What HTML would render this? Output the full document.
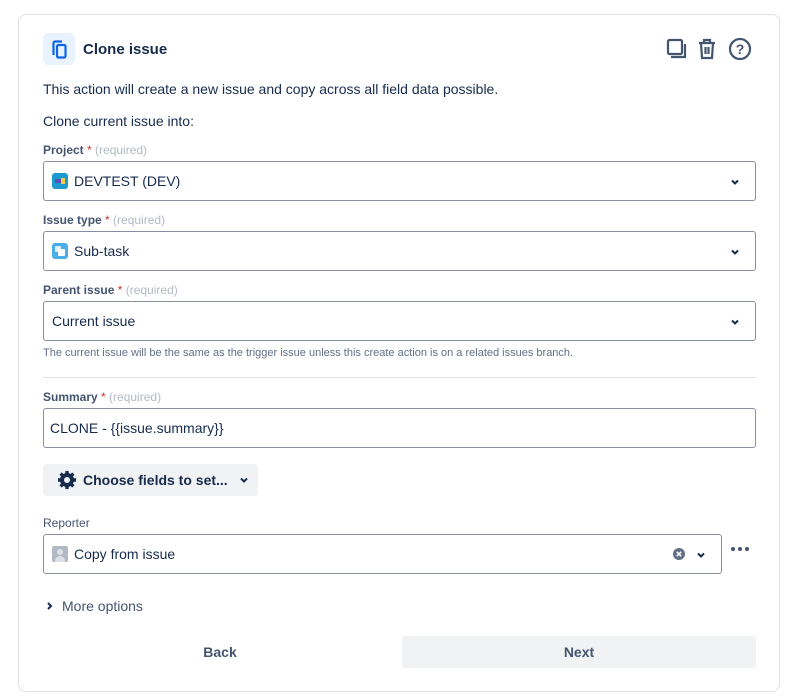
<!DOCTYPE html><html><head><style>
body{margin:0;background:#fff;font-family:"Liberation Sans",sans-serif;color:#172b4d;width:793px;height:699px;overflow:hidden;position:relative}
.card{position:absolute;left:18px;top:14px;width:762px;height:678px;border:1px solid #dfe1e6;border-radius:8px;box-sizing:border-box}
.a{position:absolute}
.lbl{font-size:12px;font-weight:bold;color:#44546f}
.lbl i{color:#c9372c;font-style:normal;font-weight:normal}
.lbl span{color:#b3b9c4;font-weight:normal}
.inp{position:absolute;left:43px;width:713px;height:40px;border:1px solid #8590a2;border-radius:3px;box-sizing:border-box;font-size:14px;display:flex;align-items:center;padding-left:8px}
.chev{position:absolute;right:14px;top:14px}
</style></head><body>
<div class="card"></div>
<div class="a" style="left:43px;top:33px;width:32px;height:32px;background:#e9f2ff;border-radius:6px">
<svg width="32" height="32" viewBox="0 0 32 32"><path d="M10.5 22V10A1.5 1.5 0 0 1 12 8.5H19" fill="none" stroke="#0c66e4" stroke-width="2.2"/><rect x="14" y="12" width="8.5" height="12.5" rx="1.5" fill="none" stroke="#0c66e4" stroke-width="2.2"/></svg></div>
<div class="a" style="left:83px;top:41px;font-size:15px;font-weight:bold">Clone issue</div>
<svg class="a" style="left:664px;top:37px" width="90" height="24" viewBox="0 0 90 24">
<g fill="none" stroke="#44546f" stroke-width="2.2"><rect x="4" y="3" width="14" height="14" rx="1.5"/><path d="M21 7v13H7"/>
<path d="M35 6h16M40 6V3h6v3M37 6l1 15h10l1-15M41.5 10v7M44.5 10v7"/>
<circle cx="76" cy="12" r="10"/></g>
<text x="76" y="17" text-anchor="middle" font-size="14" font-weight="bold" fill="#44546f" font-family="Liberation Sans">?</text></svg>
<div class="a" style="left:43px;top:81px;font-size:14px">This action will create a new issue and copy across all field data possible.</div>
<div class="a" style="left:43px;top:113px;font-size:14px">Clone current issue into:</div>
<div class="a lbl" style="left:43px;top:143px">Project <i>*</i> <span>(required)</span></div>
<div class="inp" style="top:161px"><svg width="16" height="16" style="margin-right:6px"><rect width="16" height="16" rx="3" fill="#1d9bd1"/><rect x="3" y="6" width="6" height="4" fill="#5e4db2"/><rect x="9" y="5" width="4" height="6" fill="#f5cd47"/></svg>DEVTEST (DEV)<svg class="chev" width="12" height="12"><path d="M3 4.5l3 3 3-3" fill="none" stroke="#172b4d" stroke-width="2"/></svg></div>
<div class="a lbl" style="left:43px;top:213px">Issue type <i>*</i> <span>(required)</span></div>
<div class="inp" style="top:231px"><svg width="16" height="16" style="margin-right:6px"><rect width="16" height="16" rx="3" fill="#4bade8"/><rect x="3" y="3" width="6" height="6" rx="1" fill="#fff" opacity=".8"/><rect x="6" y="6" width="7" height="7" rx="1" fill="#fff"/></svg>Sub-task<svg class="chev" width="12" height="12"><path d="M3 4.5l3 3 3-3" fill="none" stroke="#172b4d" stroke-width="2"/></svg></div>
<div class="a lbl" style="left:43px;top:283px">Parent issue <i>*</i> <span>(required)</span></div>
<div class="inp" style="top:301px">Current issue<svg class="chev" width="12" height="12"><path d="M3 4.5l3 3 3-3" fill="none" stroke="#172b4d" stroke-width="2"/></svg></div>
<div class="a" style="left:43px;top:347px;font-size:11px;color:#626f86">The current issue will be the same as the trigger issue unless this create action is on a related issues branch.</div>
<div class="a" style="left:43px;top:377px;width:713px;height:1px;background:#dfe1e6"></div>
<div class="a lbl" style="left:43px;top:390px">Summary <i>*</i> <span>(required)</span></div>
<div class="inp" style="top:408px;padding-left:6px">CLONE - {{issue.summary}}</div>
<div class="a" style="left:43px;top:464px;width:215px;height:32px;background:#f1f2f4;border-radius:3px;font-size:14px;font-weight:bold;display:flex;align-items:center">
<svg width="20" height="20" style="margin:0 6px 0 14px" viewBox="0 0 20 20"><g fill="#172b4d"><circle cx="10" cy="10" r="7"/><g stroke="#172b4d" stroke-width="3.4"><path d="M10 1v18M1 10h18M3.6 3.6l12.8 12.8M16.4 3.6L3.6 16.4"/></g></g><circle cx="10" cy="10" r="3" fill="#f1f2f4"/></svg>Choose fields to set...<svg width="12" height="12" style="margin-left:10px"><path d="M3 4.5l3 3 3-3" fill="none" stroke="#172b4d" stroke-width="2"/></svg></div>
<div class="a" style="left:43px;top:516px;font-size:12px;color:#44546f">Reporter</div>
<div class="inp" style="top:534px;width:679px"><svg width="16" height="16" style="margin-right:6px"><rect width="16" height="16" rx="2" fill="#b3b9c4"/><circle cx="8" cy="6" r="3" fill="#dcdfe4"/><path d="M3 16c0-4 2-6 5-6s5 2 5 6z" fill="#dcdfe4"/></svg>Copy from issue
<svg class="a" style="left:628px;top:12px" width="14" height="14"><circle cx="7" cy="7" r="6" fill="#626f86"/><path d="M4.8 4.8l4.4 4.4M9.2 4.8L4.8 9.2" stroke="#fff" stroke-width="1.6"/></svg>
<svg class="chev" width="12" height="12"><path d="M3 4.5l3 3 3-3" fill="none" stroke="#172b4d" stroke-width="2"/></svg></div>
<svg class="a" style="left:730px;top:546px" width="20" height="6"><circle cx="3" cy="3" r="2" fill="#44546f"/><circle cx="10" cy="3" r="2" fill="#44546f"/><circle cx="17" cy="3" r="2" fill="#44546f"/></svg>
<svg class="a" style="left:45px;top:601px" width="10" height="10"><path d="M3 2l3 3-3 3" fill="none" stroke="#172b4d" stroke-width="2"/></svg>
<div class="a" style="left:62px;top:598px;font-size:14px;color:#44546f">More options</div>
<div class="a" style="left:43px;top:636px;width:354px;height:32px;font-size:14px;font-weight:bold;display:flex;align-items:center;justify-content:center;color:#44546f">Back</div>
<div class="a" style="left:402px;top:636px;width:354px;height:32px;background:#f1f2f4;border-radius:3px;font-size:14px;font-weight:bold;display:flex;align-items:center;justify-content:center;color:#44546f">Next</div>
</body></html>
